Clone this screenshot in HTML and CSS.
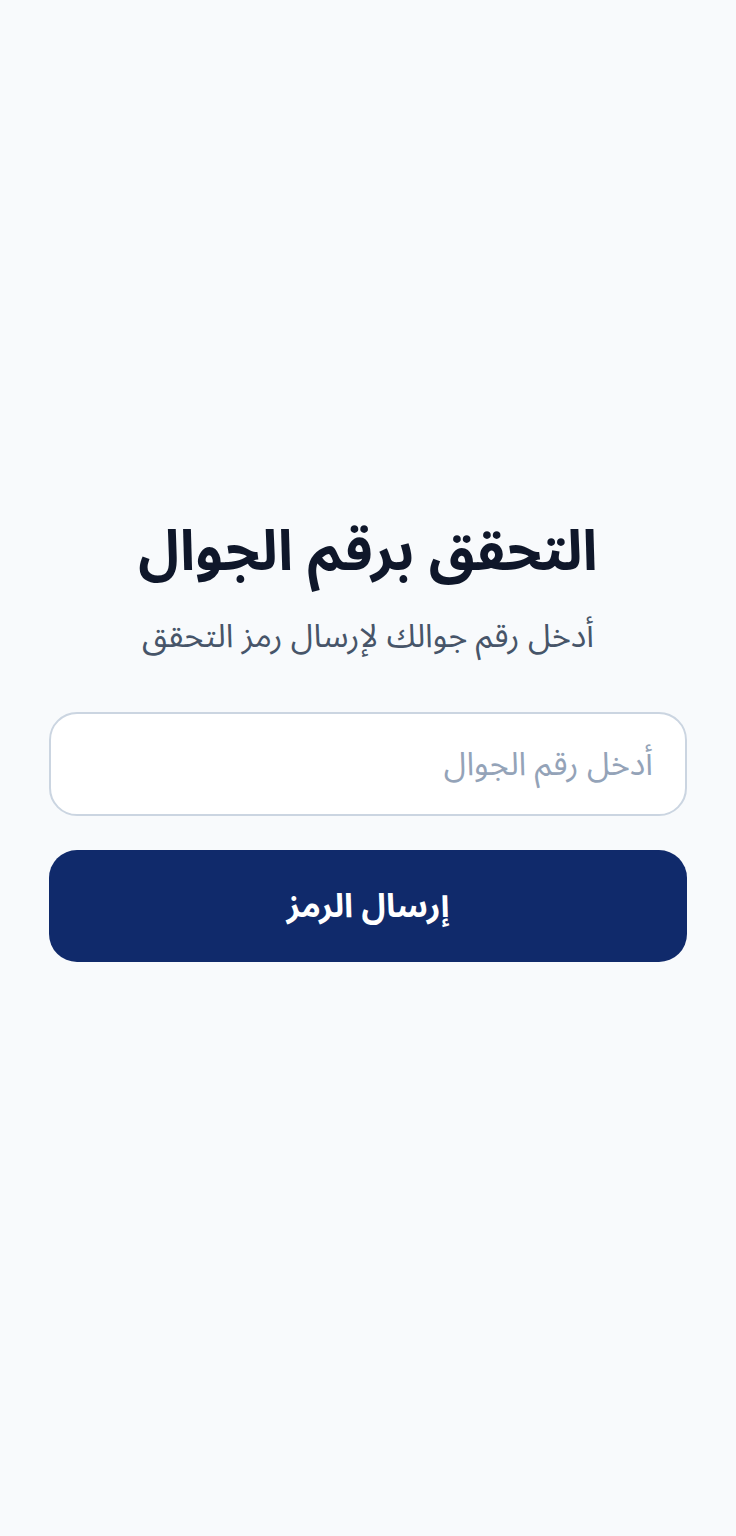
FILE: index.html
```html
<!DOCTYPE html>
<html lang="ar" dir="rtl">
<head>
<meta charset="utf-8">
<title>التحقق برقم الجوال</title>
<link rel="stylesheet" href="styles.css">
</head>
<body>
<main class="page">
  <section class="card">
    <h1 class="title">التحقق برقم الجوال</h1>
    <p class="subtitle">أدخل رقم جوالك لإرسال رمز التحقق</p>
    <div class="field">
      <span class="placeholder">أدخل رقم الجوال</span>
    </div>
    <button class="btn" type="button">إرسال الرمز</button>
  </section>
</main>
</body>
</html>
```

FILE: styles.css
```css
html, body {
  margin: 0;
  padding: 0;
  background: #f8fafc;
}
body {
  font-family: "Noto Sans Arabic", "Noto Sans Arabic UI", "Noto Sans", "DejaVu Sans", sans-serif;
  color: #0f172a;
}
.page {
  min-height: 1536px;
  box-sizing: border-box;
  padding: 502px 49px 0 49px;
}
.card {
  display: flex;
  flex-direction: column;
  align-items: stretch;
}
.title {
  margin: 0;
  text-align: center;
  font-size: 56px;
  font-weight: 700;
  line-height: 100px;
  color: #0f172a;
}
.subtitle {
  margin: 7px 0 0 0;
  text-align: center;
  font-size: 32.5px;
  line-height: 56px;
  color: #475569;
}
.field {
  margin-top: 47px;
  height: 104px;
  box-sizing: border-box;
  border: 2px solid #cbd5e1;
  border-radius: 28px;
  background: #ffffff;
  display: flex;
  align-items: center;
  padding: 0 32px;
}
.placeholder {
  font-size: 32.5px;
  color: #94a3b8;
}
.btn {
  margin-top: 34px;
  height: 112px;
  border: none;
  border-radius: 28px;
  background: #102a6b;
  color: #ffffff;
  font-family: inherit;
  font-size: 33px;
  font-weight: 700;
}
```
